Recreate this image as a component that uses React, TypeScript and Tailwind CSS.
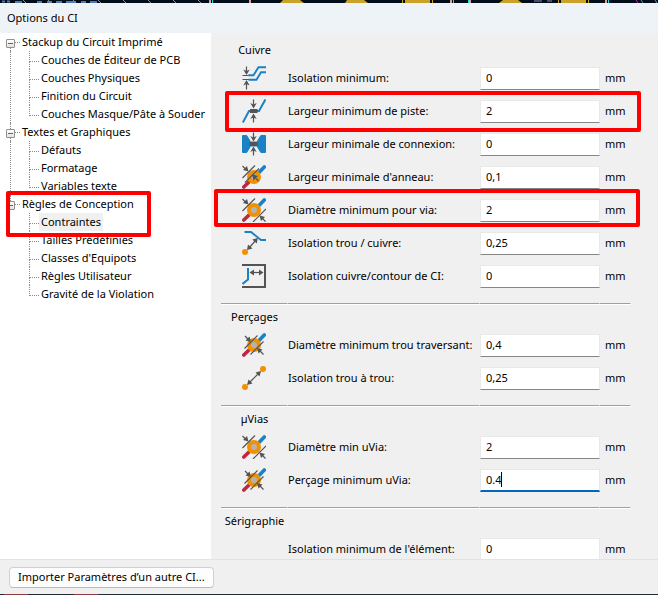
import type { ReactNode } from "react";

const GRAY = "#545454";
const BLUE = "#1a81c4";
const ORANGE = "#f29100";
const RED = "#bf2641";

function Icon({ children }: { children: ReactNode }) {
  return (
    <svg className="h-6 w-6" viewBox="0 0 24 24" fill="none" aria-hidden="true">
      {children}
    </svg>
  );
}

function VerticalArrows({ x, top, bottom }: { x: number; top: number; bottom: number }) {
  return (
    <g stroke={GRAY} strokeWidth="1.2" fill={GRAY}>
      <path d={`M${x} 0.5V${top - 3}`} />
      <path d={`M${x} 23.5V${bottom + 3}`} />
      <path d={`M${x - 3.2} ${top - 5.5}L${x} ${top - 4}L${x + 3.2} ${top - 5.5}L${x} ${top}Z`} stroke="none" />
      <path d={`M${x - 3.2} ${bottom + 5.5}L${x} ${bottom + 4}L${x + 3.2} ${bottom + 5.5}L${x} ${bottom}Z`} stroke="none" />
    </g>
  );
}

function ClearanceIcon() {
  return (
    <Icon>
      <path d="M0.5 9.5H7M0.5 13.5H7" stroke={GRAY} strokeWidth="1" />
      <path d="M6.5 9.2H11.5L16.5 1.2H24M6.5 13.8H14.5L19 6.2H24" stroke={BLUE} strokeWidth="1.9" />
      <VerticalArrows x={4.5} top={9} bottom={14} />
    </Icon>
  );
}

function TrackWidthIcon() {
  return (
    <Icon>
      <path d="M0.8 23.5L7 12H17L23.4 0.5" stroke={BLUE} strokeWidth="2" />
      <path d="M8 10H15.5V14H8Z" fill={GRAY} />
      <VerticalArrows x={11.5} top={9.5} bottom={14.5} />
    </Icon>
  );
}

function ConnectionWidthIcon() {
  return (
    <Icon>
      <path d="M1 3H4.5L5.5 4L8.500 9V15L5.500 20L4.500 21H1Q0 21 0 20V4Q0 3 1 3Z" fill={BLUE} />
      <path d="M23 3H19L18 4L15 9V15L18 20L19 21H23Q24 21 24 20V4Q24 3 23 3Z" fill={BLUE} />
      <path d="M5.5 12H18" stroke={BLUE} strokeWidth="5" />
      <path d="M7.5 10H15.5V14H7.5Z" fill={GRAY} />
      <VerticalArrows x={11.5} top={9.5} bottom={14.5} />
    </Icon>
  );
}

function ViaBase() {
  return (
    <>
      <path d="M1.8 22L7 17" stroke={RED} strokeWidth="3.6" strokeLinecap="round" />
      <path d="M17 7.5L22.3 2" stroke={BLUE} strokeWidth="3.6" strokeLinecap="round" />
      <circle cx="12" cy="12" r="5" fill="#b3b3b3" stroke={ORANGE} strokeWidth="4" />
    </>
  );
}

function ViaDiameterIcon() {
  return (
    <Icon>
      <ViaBase />
      <path d="M0.5 13L13 0.5M11 24L24 11M0.5 1L4 4.5M23.5 23.5L20 20" stroke={GRAY} strokeWidth="1.2" />
      <path d="M6.5 6.5L1 5L5 1ZM17.5 17.5L19 23L23 19Z" fill={GRAY} />
    </Icon>
  );
}

function DrillIcon() {
  return (
    <Icon>
      <ViaBase />
      <path d="M2.500 15.5L15.5 2.5M8.5 21.500L21.5 8.5M3 3L6 6M21.5 21.5L18 18" stroke={GRAY} strokeWidth="1.2" />
      <path d="M9 9L3.5 7.5L7.5 3.5ZM15 15L16.5 20.5L20.5 16.5Z" fill={GRAY} />
    </Icon>
  );
}

function AnnularIcon() {
  return (
    <Icon>
      <ViaBase />
      <path d="M0.5 13L13 0.5M3 17.5L17 3.5M0.5 1L4 4.5M16.5 16L13 12.5" stroke={GRAY} strokeWidth="1.2" />
      <path d="M6.5 6.5L1 5L5 1ZM10 9L11.5 15.5L16 11Z" fill={GRAY} />
    </Icon>
  );
}

function HoleCopperIcon() {
  return (
    <Icon>
      <path d="M2.5 1H9L19 9H24" stroke={BLUE} strokeWidth="1.9" />
      <path d="M7 17L14 9" stroke={GRAY} strokeWidth="1.2" />
      <path d="M5 19L6 13.5L10.5 17.5ZM15.8 7L14.8 12.5L10.3 8.5Z" fill={GRAY} />
      <circle cx="3" cy="21" r="3" fill={ORANGE} />
    </Icon>
  );
}

function EdgeIcon() {
  return (
    <Icon>
      <path d="M0 1H23V23H0" stroke={GRAY} strokeWidth="2" />
      <path d="M0.5 20L6 15.5V4" stroke={BLUE} strokeWidth="2" />
      <path d="M10 8.5H19" stroke={GRAY} strokeWidth="1.2" />
      <path d="M7.5 8.5L12 5.5V11.5ZM21.5 8.5L17 5.5V11.5Z" fill={GRAY} />
    </Icon>
  );
}

function HoleHoleIcon() {
  return (
    <Icon>
      <path d="M8 16L16 8" stroke={GRAY} strokeWidth="1.2" />
      <path d="M5 19L6.5 13.5L10.5 17.5ZM19 5L17.5 10.5L13.5 6.5Z" fill={GRAY} />
      <circle cx="3" cy="21" r="3" fill={ORANGE} />
      <circle cx="21" cy="3" r="3" fill={ORANGE} />
    </Icon>
  );
}

type Field = { id: string; label: string; value: string; icon?: ReactNode; mark?: string; focused?: boolean };
type Group = { title: string; fields: Field[] };

const groups: Group[] = [
  {
    title: "Cuivre",
    fields: [
      { id: "clearance", label: "Isolation minimum:", value: "0", icon: <ClearanceIcon /> },
      { id: "track", label: "Largeur minimum de piste:", value: "2", icon: <TrackWidthIcon />, mark: "-inset-y-1 left-1 -right-[10px]" },
      { id: "connection", label: "Largeur minimale de connexion:", value: "0", icon: <ConnectionWidthIcon /> },
      { id: "annular", label: "Largeur minimale d'anneau:", value: "0,1", icon: <AnnularIcon /> },
      { id: "via", label: "Diamètre minimum pour via:", value: "2", icon: <ViaDiameterIcon />, mark: "-top-[5px] bottom-0 -left-[7px] -right-[9px]" },
      { id: "hole-copper", label: "Isolation trou / cuivre:", value: "0,25", icon: <HoleCopperIcon /> },
      { id: "edge", label: "Isolation cuivre/contour de CI:", value: "0", icon: <EdgeIcon /> },
    ],
  },
  {
    title: "Perçages",
    fields: [
      { id: "through", label: "Diamètre minimum trou traversant:", value: "0,4", icon: <DrillIcon /> },
      { id: "hole-hole", label: "Isolation trou à trou:", value: "0,25", icon: <HoleHoleIcon /> },
    ],
  },
  {
    title: "µVias",
    fields: [
      { id: "uvia", label: "Diamètre min uVia:", value: "2", icon: <ViaDiameterIcon /> },
      { id: "uvia-drill", label: "Perçage minimum uVia:", value: "0.4", icon: <DrillIcon />, focused: true },
    ],
  },
  {
    title: "Sérigraphie",
    fields: [{ id: "silk", label: "Isolation minimum de l'élément:", value: "0" }],
  },
];

const COLS = "grid grid-cols-[67px_minmax(0,1fr)_120px_31px]";
const MARK = "pointer-events-none absolute z-10 rounded-xs border-4 border-[#ff0000]";

function FieldRow({ field }: { field: Field }) {
  return (
    <div className={`relative h-[33px] items-center ${COLS}`}>
      <span className="flex justify-center pr-px pb-px">{field.icon}</span>
      <label htmlFor={field.id} className="pb-[2px] whitespace-nowrap">
        {field.label}
      </label>
      <span className="relative">
        <input
          id={field.id}
          type="text"
          defaultValue={field.value}
          className={
            field.focused
              ? "block h-[23px] w-full border border-b-2 border-[#e4e8ec] border-b-[#0067c0] bg-white px-[5px] pb-px caret-transparent outline-none"
              : "block h-[23px] w-full border border-[#e9e9e9] border-b-[#868686] bg-white px-[5px] pb-[2px] outline-none"
          }
        />
        {field.focused && <span className="absolute top-[3px] left-[21px] h-[15px] w-px bg-black" />}
      </span>
      <span className="pb-[2px] pl-[5px]">mm</span>
      {field.mark && <span className={`${MARK} ${field.mark}`} />}
    </div>
  );
}

function Separator() {
  return (
    <div className={`mt-[10px] h-[2px] ${COLS}`}>
      {[0, 1, 2, 3].map((i) => (
        <span key={i} className="border-t border-r border-b border-t-[#a0a0a0] border-r-white border-b-white" />
      ))}
    </div>
  );
}

type Branch = { title: string; children: string[]; marked?: boolean };

const tree: Branch[] = [
  {
    title: "Stackup du Circuit Imprimé",
    children: ["Couches de Éditeur de PCB", "Couches Physiques", "Finition du Circuit", "Couches Masque/Pâte à Souder"],
  },
  { title: "Textes et Graphiques", children: ["Défauts", "Formatage", "Variables texte"] },
  {
    title: "Règles de Conception",
    marked: true,
    children: ["Contraintes", "Tailles Prédéfinies", "Classes d'Equipots", "Règles Utilisateur", "Gravité de la Violation"],
  },
];

const DOTS = "border-dotted border-[#8c8c8c]";

function TreeBranch({ branch, first, last }: { branch: Branch; first: boolean; last: boolean }) {
  return (
    <li className="relative">
      <div className="flex h-[18px] items-center">
        <span className="flex h-full w-[9px] flex-col items-center">
          <span className={first ? "h-[6px] w-px" : `h-[6px] w-px border-l ${DOTS}`} />
          <button
            type="button"
            aria-label={`Réduire ${branch.title}`}
            className="flex h-[9px] w-[9px] shrink-0 items-center justify-center rounded-[1px] border border-[#919191] bg-linear-to-b from-white to-[#e2e2e2]"
          >
            <span className="h-px w-[5px] bg-[#4b63a7]" />
          </button>
          <span className={last ? "h-[3px] w-px" : `h-[3px] w-px border-l ${DOTS}`} />
        </span>
        <span className={`mt-px w-[5px] border-t ${DOTS}`} />
        <span className="px-[2px] whitespace-nowrap">{branch.title}</span>
      </div>
      <ul className={last ? "ml-[4px] pl-[19px]" : `ml-[4px] border-l pl-[18px] ${DOTS}`}>
        {branch.children.map((name, i) => (
          <li key={name} className="flex h-[18px]">
            <span className="flex w-[10px] shrink-0 flex-col">
              <span className={`h-[11px] border-b border-l ${DOTS}`} />
              {i < branch.children.length - 1 && <span className={`h-[7px] border-l ${DOTS}`} />}
            </span>
            <span
              className={
                name === "Contraintes"
                  ? "flex items-center bg-[#f0f0f0] px-[2px] whitespace-nowrap"
                  : "flex items-center px-[2px] whitespace-nowrap"
              }
            >
              {name}
            </span>
          </li>
        ))}
      </ul>
      {branch.marked && <span className={`${MARK} -top-1 left-0 h-[46px] w-[145px]`} />}
    </li>
  );
}

function CanvasStrip() {
  return (
    <svg className="h-[3px] w-full shrink-0 bg-[#020d1a]" viewBox="0 0 658 3" preserveAspectRatio="none" aria-hidden="true">
      <path d="M2 1.5H5M7 1.5H10M15 2H22M37 2H42M47 2H52M56 2H62M66 2H76M81 2H86M90 2H97" stroke="#4a7ac0" strokeWidth="2" />
      <path d="M23 0L26 3M48 0L51 3M73 0L76 3M98 0L101 3M123 0L126 3M148 0L151 3M173 0L176 3M198 0L201 3" stroke="#8a8f96" />
      <path d="M210 0V3M250 0V3M451 0V3M606 0V3M470 0V3" stroke="#d9a39a" strokeWidth="2" />
      <path d="M212.5 0V3M453.5 0V3M608.5 0V3M468.5 0V3" stroke="#2fd4dc" />
      <path d="M283 0H300L304 3H280ZM347 0H364L368 3H345ZM405 0H430V3H405ZM503 0H518L522 3H499ZM561 0H586V3H561Z" fill="#c9a227" />
      <path d="M402.5 0V3M432.5 0V3M558.5 0V3M588.5 0V3" stroke="#c9a227" />
      <path d="M534 1H542M547 1H552" stroke="#4b4a70" strokeWidth="2" />
      <path d="M636 0L638 3" stroke="#d01bbd" />
      <path d="M641 0L643 3M655 0L657 3" stroke="#4a9ac0" />
    </svg>
  );
}

export default function App() {
  return (
    <div className="flex h-screen flex-col overflow-hidden bg-[#f0f0f0] font-['Noto_Sans','Liberation_Sans',sans-serif] text-[11px] leading-4 text-black">
      <CanvasStrip />
      <header className="flex h-[30px] shrink-0 items-center bg-[#eef3f8] px-[7px]">
        <h1>Options du CI</h1>
      </header>
      <main className="flex min-h-0 flex-1">
        <nav className="w-[211px] shrink-0 overflow-hidden bg-white pl-[6px]">
          <ul>
            {tree.map((branch, i) => (
              <TreeBranch key={branch.title} branch={branch} first={i === 0} last={i === tree.length - 1} />
            ))}
          </ul>
        </nav>
        <form className="min-w-0 flex-1 overflow-hidden pt-[5px] pr-[27px] pl-[10px]">
          {groups.map((group, i) => (
            <section key={group.title}>
              {i > 0 && <Separator />}
              <h2 className="flex h-6 w-[67px] items-center justify-center">{group.title}</h2>
              {group.fields.map((field) => (
                <FieldRow key={field.id} field={field} />
              ))}
            </section>
          ))}
        </form>
      </main>
      <footer className="flex h-[35px] shrink-0 items-center border-t border-[#e2e2e2] px-[9px]">
        <button type="button" className="h-[21px] rounded-sm border border-[#d0d0d0] border-b-[#bababa] bg-[#fdfdfd] px-2 whitespace-nowrap">
          Importer Paramètres d’un autre CI...
        </button>
      </footer>
      <div className="flex h-px shrink-0 bg-[#262b3a]">
        <span className="ml-1 w-6 bg-[#8d3a44]" />
        <span className="ml-[46px] w-6 bg-[#8d3a44]" />
      </div>
    </div>
  );
}
